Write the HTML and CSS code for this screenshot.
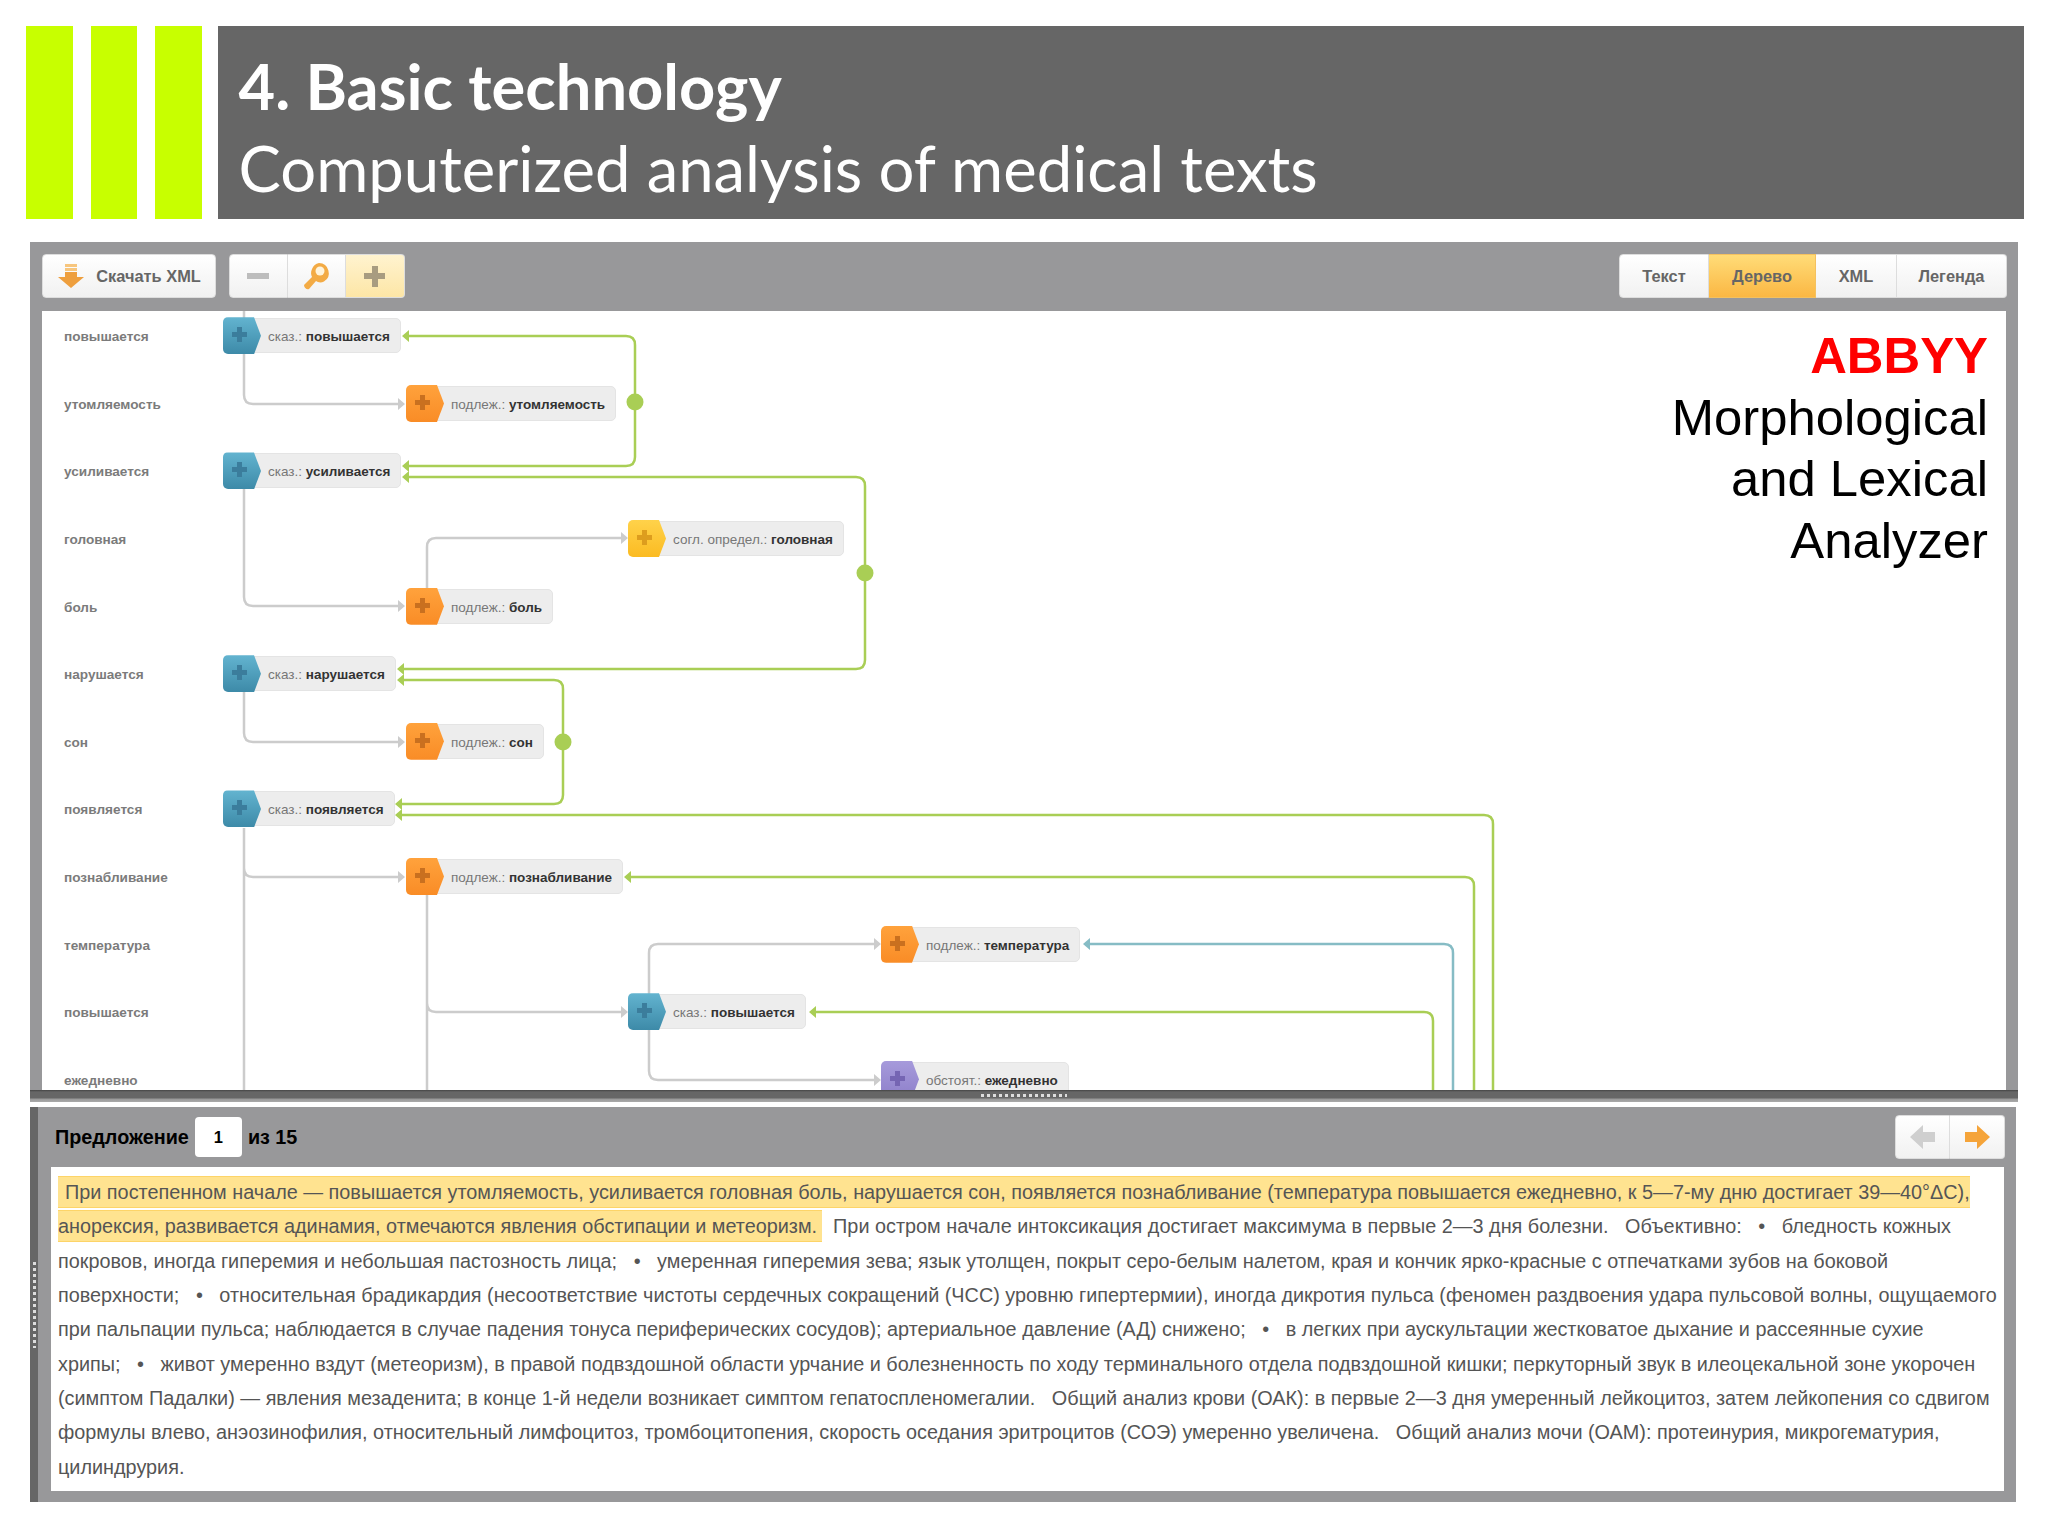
FILE: index.html
```html
<!DOCTYPE html>
<html lang="ru">
<head>
  <meta charset="UTF-8">
  <title>4. Basic technology</title>
  <link rel="stylesheet" href="styles.css">
</head>
<body>
  <header class="slide-head">
    <div class="bars"><span></span><span></span><span></span></div>
    <div class="title">
      <h1>4. Basic technology</h1>
      <p>Computerized analysis of medical texts</p>
    </div>
  </header>

  <section class="tree-panel">
    <div class="toolbar">
      <button class="btn btn-xml">
        <svg width="26" height="24" viewBox="0 0 26 24"><path fill="#f7c67e" d="M7 0h12v3H7zM7 4h12v3H7z"/><path fill="#ee9f3e" d="M7 8h12v5h7L13 24 0 13h7z"/></svg>
        Скачать XML
      </button>
      <div class="btn-group">
        <button class="btn btn-icon"><span class="minus"></span></button>
        <button class="btn btn-icon">
          <svg width="30" height="28" viewBox="0 0 28 28"><path fill="#f3ab45" d="M17 1a10 10 0 0 1 5 18.500c-3 1.500-6 1-8-.500L7 27c-2 1-5-1-5-4l8-8c-1-2-1.500-5 0-8A10 10 0 0 1 17 1z"/><circle cx="18" cy="9" r="4.500" fill="#fff4dc"/></svg>
        </button>
        <button class="btn btn-icon btn-on"><span class="plus"></span></button>
      </div>
      <div class="tabs">
        <button class="btn tab">Текст</button>
        <button class="btn tab tab-on">Дерево</button>
        <button class="btn tab">XML</button>
        <button class="btn tab">Легенда</button>
      </div>
    </div>

    <div class="canvas">
      <svg class="links" width="1964" height="779" viewBox="0 0 1964 779">
        <g class="gray">
          <path d="M202 0V84Q202 93 211 93H358"/>
          <path d="M202 160V286Q202 295 211 295H358"/>
          <path d="M385 295V236Q385 227 394 227H580"/>
          <path d="M202 360V422Q202 431 211 431H358"/>
          <path d="M202 517V779M202 557Q202 566 211 566H358"/>
          <path d="M385 584V779M385 692Q385 701 394 701H580"/>
          <path d="M607 701V642Q607 633 616 633H834M607 701V760Q607 769 616 769H834"/>
        </g>
        <g class="gray-tip">
          <path d="M356 87l7 6-7 6zM356 289l7 6-7 6zM579 221l7 6-7 6zM356 425l7 6-7 6zM356 560l7 6-7 6zM579 695l7 6-7 6zM832 627l7 6-7 6zM832 763l7 6-7 6z"/>
        </g>
        <g class="green">
          <path d="M366 25H584Q593 25 593 34V146Q593 155 584 155H366"/>
          <path d="M366 166H814Q823 166 823 175V349Q823 358 814 358H361"/>
          <path d="M361 369H512Q521 369 521 378V484Q521 493 512 493H359"/>
          <path d="M359 504H1442Q1451 504 1451 513V779"/>
          <path d="M588 566H1423Q1432 566 1432 575V779"/>
          <path d="M773 701H1382Q1391 701 1391 710V779"/>
        </g>
        <g class="green-tip">
          <path d="M360 25l7-6v12zM360 155l7-6v12zM360 166l7-6v12zM355 358l7-6v12zM355 369l7-6v12zM353 493l7-6v12zM353 504l7-6v12zM582 566l7-6v12zM767 701l7-6v12z"/>
          <circle cx="593" cy="91" r="8.500"/>
          <circle cx="823" cy="262" r="8.500"/>
          <circle cx="521" cy="431" r="8.500"/>
        </g>
        <path class="teal" d="M1047 633H1402Q1411 633 1411 642V779"/>
        <path class="teal-tip" d="M1041 633l7-6v12z"/>
      </svg>

      <div class="abbyy">
        <strong>ABBYY</strong><br>
        Morphological<br>
        and Lexical<br>
        Analyzer
      </div>

      <div class="tree">
        <div class="word r1">повышается</div>
        <div class="word r2">утомляемость</div>
        <div class="word r3">усиливается</div>
        <div class="word r4">головная</div>
        <div class="word r5">боль</div>
        <div class="word r6">нарушается</div>
        <div class="word r7">сон</div>
        <div class="word r8">появляется</div>
        <div class="word r9">познабливание</div>
        <div class="word r10">температура</div>
        <div class="word r11">повышается</div>
        <div class="word r12">ежедневно</div>

        <div class="node c2 r1"><span class="hex blue"></span><span class="tag">сказ.: <b>повышается</b></span></div>
        <div class="node c3 r2"><span class="hex orange"></span><span class="tag">подлеж.: <b>утомляемость</b></span></div>
        <div class="node c2 r3"><span class="hex blue"></span><span class="tag">сказ.: <b>усиливается</b></span></div>
        <div class="node c4 r4"><span class="hex yellow"></span><span class="tag">согл. определ.: <b>головная</b></span></div>
        <div class="node c3 r5"><span class="hex orange"></span><span class="tag">подлеж.: <b>боль</b></span></div>
        <div class="node c2 r6"><span class="hex blue"></span><span class="tag">сказ.: <b>нарушается</b></span></div>
        <div class="node c3 r7"><span class="hex orange"></span><span class="tag">подлеж.: <b>сон</b></span></div>
        <div class="node c2 r8"><span class="hex blue"></span><span class="tag">сказ.: <b>появляется</b></span></div>
        <div class="node c3 r9"><span class="hex orange"></span><span class="tag">подлеж.: <b>познабливание</b></span></div>
        <div class="node c5 r10"><span class="hex orange"></span><span class="tag">подлеж.: <b>температура</b></span></div>
        <div class="node c4 r11"><span class="hex blue"></span><span class="tag">сказ.: <b>повышается</b></span></div>
        <div class="node c5 r12"><span class="hex purple"></span><span class="tag">обстоят.: <b>ежедневно</b></span></div>
      </div>
    </div>
    <div class="splitter"><span></span></div>
  </section>

  <section class="text-panel">
    <div class="side-grip"><span></span></div>
    <div class="text-main">
      <div class="pager">
        <b>Предложение</b>
        <span class="page-num">1</span>
        <b>из 15</b>
        <div class="nav">
          <button class="btn btn-nav">
            <svg width="26" height="24" viewBox="0 0 26 24"><path fill="#cfcfcf" d="M13 0L0 12l13 12v-7h12V7H13z"/></svg>
          </button>
          <button class="btn btn-nav">
            <svg width="26" height="24" viewBox="0 0 26 24"><path fill="#f5a43a" d="M13 0l13 12-13 12v-7H1V7h12z"/></svg>
          </button>
        </div>
      </div>
      <div class="sentence">
        <span class="mark">При постепенном начале — повышается утомляемость, усиливается головная боль, нарушается сон, появляется познабливание (температура повышается ежедневно, к 5—7-му дню достигает 39—40°ΔС),<br>анорексия, развивается адинамия, отмечаются явления обстипации и метеоризм.</span>&nbsp; При остром начале интоксикация достигает максимума в первые 2—3 дня болезни. &nbsp; Объективно: &nbsp; • &nbsp; бледность кожных<br>
        покровов, иногда гиперемия и небольшая пастозность лица; &nbsp; • &nbsp; умеренная гиперемия зева; язык утолщен, покрыт серо-белым налетом, края и кончик ярко-красные с отпечатками зубов на боковой<br>
        поверхности; &nbsp; • &nbsp; относительная брадикардия (несоответствие чистоты сердечных сокращений (ЧСС) уровню гипертермии), иногда дикротия пульса (феномен раздвоения удара пульсовой волны, ощущаемого<br>
        при пальпации пульса; наблюдается в случае падения тонуса периферических сосудов); артериальное давление (АД) снижено; &nbsp; • &nbsp; в легких при аускультации жестковатое дыхание и рассеянные сухие<br>
        хрипы; &nbsp; • &nbsp; живот умеренно вздут (метеоризм), в правой подвздошной области урчание и болезненность по ходу терминального отдела подвздошной кишки; перкуторный звук в илеоцекальной зоне укорочен<br>
        (симптом Падалки) — явления мезаденита; в конце 1-й недели возникает симптом гепатоспленомегалии. &nbsp; Общий анализ крови (ОАК): в первые 2—3 дня умеренный лейкоцитоз, затем лейкопения со сдвигом<br>
        формулы влево, анэозинофилия, относительный лимфоцитоз, тромбоцитопения, скорость оседания эритроцитов (СОЭ) умеренно увеличена. &nbsp; Общий анализ мочи (ОАМ): протеинурия, микрогематурия,<br>
        цилиндрурия.
      </div>
    </div>
  </section>
</body>
</html>
```

FILE: styles.css
```css
* { box-sizing: border-box; }
body { margin: 0; padding: 26px 24px 0 26px; background: #fff; font-family: "Liberation Sans", Arial, sans-serif; }

/* slide header */
.slide-head { display: flex; height: 193px; gap: 16px; }
.bars { display: flex; gap: 18px; }
.bars span { width: 46.5px; background: #c8ff00; }
.title { flex: 1; background: #666; color: #fff; padding: 19px 21px 0; font-family: Lato, "Open Sans", sans-serif; }
.title h1 { margin: 0; font-size: 63.2px; line-height: 82px; font-weight: 700; }
.title p { margin: 0; font-size: 63.4px; line-height: 82px; font-weight: 400; }

/* buttons */
.btn { display: flex; align-items: center; justify-content: center; height: 44px; padding: 0; border: 1px solid #ddd; border-radius: 4px; background: linear-gradient(#fff, #f1f1f1); color: #666; font: bold 16.4px "Liberation Sans", Arial, sans-serif; }
.btn-group, .tabs, .nav { display: flex; }
.btn-group .btn, .tabs .btn, .nav .btn { border-radius: 0; border-left: 0; }
.btn-group .btn:first-child, .tabs .btn:first-child, .nav .btn:first-child { border-left: 1px solid #ddd; border-radius: 4px 0 0 4px; }
.btn-group .btn:last-child, .tabs .btn:last-child, .nav .btn:last-child { border-radius: 0 4px 4px 0; }

/* top panel */
.tree-panel { margin: 23px 0 0 4px; width: 1988px; background: #98989a; }
.toolbar { display: flex; align-items: center; height: 69px; padding: 0 11px 1px 12px; gap: 13px; }
.btn-xml { width: 174px; gap: 12px; padding-left: 1px; }
.btn-icon { width: 58.500px; }
.minus { width: 22px; height: 6px; background: #bdbdbd; }
.plus { width: 21px; height: 21px; background: linear-gradient(#a89c80, #a89c80) center / 6px 21px no-repeat, linear-gradient(#a89c80, #a89c80) center / 21px 6px no-repeat; }
.btn-on { background: linear-gradient(#fff3cf, #fde6a6); }
.tabs { margin-left: auto; }
.tab { width: 90px; }
.tab:nth-child(2) { width: 107px; }
.tab:nth-child(3) { width: 81px; }
.tab:nth-child(4) { width: 110px; }
.tab-on { background: linear-gradient(#ffdc78, #fbb743); border-color: #f4c15f; }

.canvas { position: relative; height: 779px; margin: 0 12px; background: #fff; overflow: hidden; }
.links { position: absolute; left: 0; top: 0; }
.links path { fill: none; stroke-width: 2.5; }
.gray path { stroke: #cccccc; }
.links .gray-tip path { fill: #cccccc; stroke: none; }
.green path { stroke: #a9ce55; }
.links .green-tip path, .green-tip circle { fill: #a9ce55; stroke: none; }
.links .teal { stroke: #86bcc5; }
.links .teal-tip { fill: #86bcc5; stroke: none; }

.abbyy { position: absolute; top: 14px; right: 18px; text-align: right; font-size: 50.8px; line-height: 61.500px; color: #000; }
.abbyy strong { color: #f00; }

.tree { position: relative; display: grid; margin-top: -9px; grid-template-columns: 181px 183px 222px 253px 1fr; grid-template-rows: repeat(12, 67.600px); align-items: center; justify-items: start; }
.word { grid-column: 1; padding: 2px 0 0 22px; color: #7b7b7b; font-size: 13.600px; font-weight: bold; }
.c2 { grid-column: 2; }
.c3 { grid-column: 3; }
.c4 { grid-column: 4; }
.c5 { grid-column: 5; }
.r1 { grid-row: 1; }
.r2 { grid-row: 2; }
.r3 { grid-row: 3; }
.r4 { grid-row: 4; }
.r5 { grid-row: 5; }
.r6 { grid-row: 6; }
.r7 { grid-row: 7; }
.r8 { grid-row: 8; }
.r9 { grid-row: 9; }
.r10 { grid-row: 10; }
.r11 { grid-row: 11; }
.r12 { grid-row: 12; }

.node { display: flex; align-items: center; white-space: nowrap; }
.hex { position: relative; z-index: 1; width: 38px; height: 37px; border-radius: 5px 0 0 5px; clip-path: polygon(0 0, 31px 0, 100% 50%, 31px 100%, 0 100%); }
.hex::before { content: ""; position: absolute; left: 9px; top: 10px; width: 15px; height: 15px; background: linear-gradient(var(--mark), var(--mark)) center / 5px 15px no-repeat, linear-gradient(var(--mark), var(--mark)) center / 15px 5px no-repeat; }
.blue { background: linear-gradient(#63b4d0, #3d8aa8); --mark: #3b7d9c; }
.orange { background: linear-gradient(#ffa23c, #f98c26); --mark: #c9701f; }
.yellow { background: linear-gradient(#ffd24a, #fbbb22); --mark: #dd9d1e; }
.purple { background: linear-gradient(#a69adb, #8e80ca); --mark: #7565b3; }
.tag { display: block; height: 35px; margin-left: -11px; padding: 0 10px 0 17px; border: 1px solid #e4e4e4; border-radius: 5px; background: #ededed; color: #777; font-size: 13.500px; line-height: 35px; }
.tag b { color: #333; }

.splitter { display: flex; justify-content: center; height: 12px; padding-top: 4px; background: linear-gradient(#444 0, #666 2px, #666 8px, #999 9px, #aaa 12px); }
.splitter span { width: 86px; height: 3px; background: repeating-linear-gradient(90deg, #ddd 0 3px, transparent 3px 6px); }

/* bottom panel */
.text-panel { display: flex; margin: 5px 0 0 4px; width: 1986px; height: 395px; background: #98989a; }
.side-grip { display: flex; align-items: center; justify-content: center; width: 8px; background: #666; }
.side-grip span { width: 3px; height: 86px; background: repeating-linear-gradient(#ddd 0 3px, transparent 3px 6px); }
.text-main { flex: 1; padding: 0 12px 11px 13px; display: flex; flex-direction: column; }
.pager { display: flex; align-items: center; height: 60px; padding: 0 0 0 4px; color: #000; font-size: 19.8px; }
.page-num { display: flex; align-items: center; justify-content: center; width: 47px; height: 40px; margin: 0 6px 0 6px; border-radius: 4px; background: #fff; font-size: 16.5px; font-weight: bold; }
.nav { margin: 0 -1px 0 auto; }
.btn-nav { width: 55px; }
.sentence { flex: 1; padding: 8px 0 0 7px; background: #fff; color: #555; font-size: 19.830px; line-height: 34.350px; white-space: nowrap; }
.mark { padding: 4px 5px 4px 0; background: #ffe390; border: 1px solid #fdd468; border-width: 1px 0; }
.mark::before { content: ""; padding-left: 7px; }
```
